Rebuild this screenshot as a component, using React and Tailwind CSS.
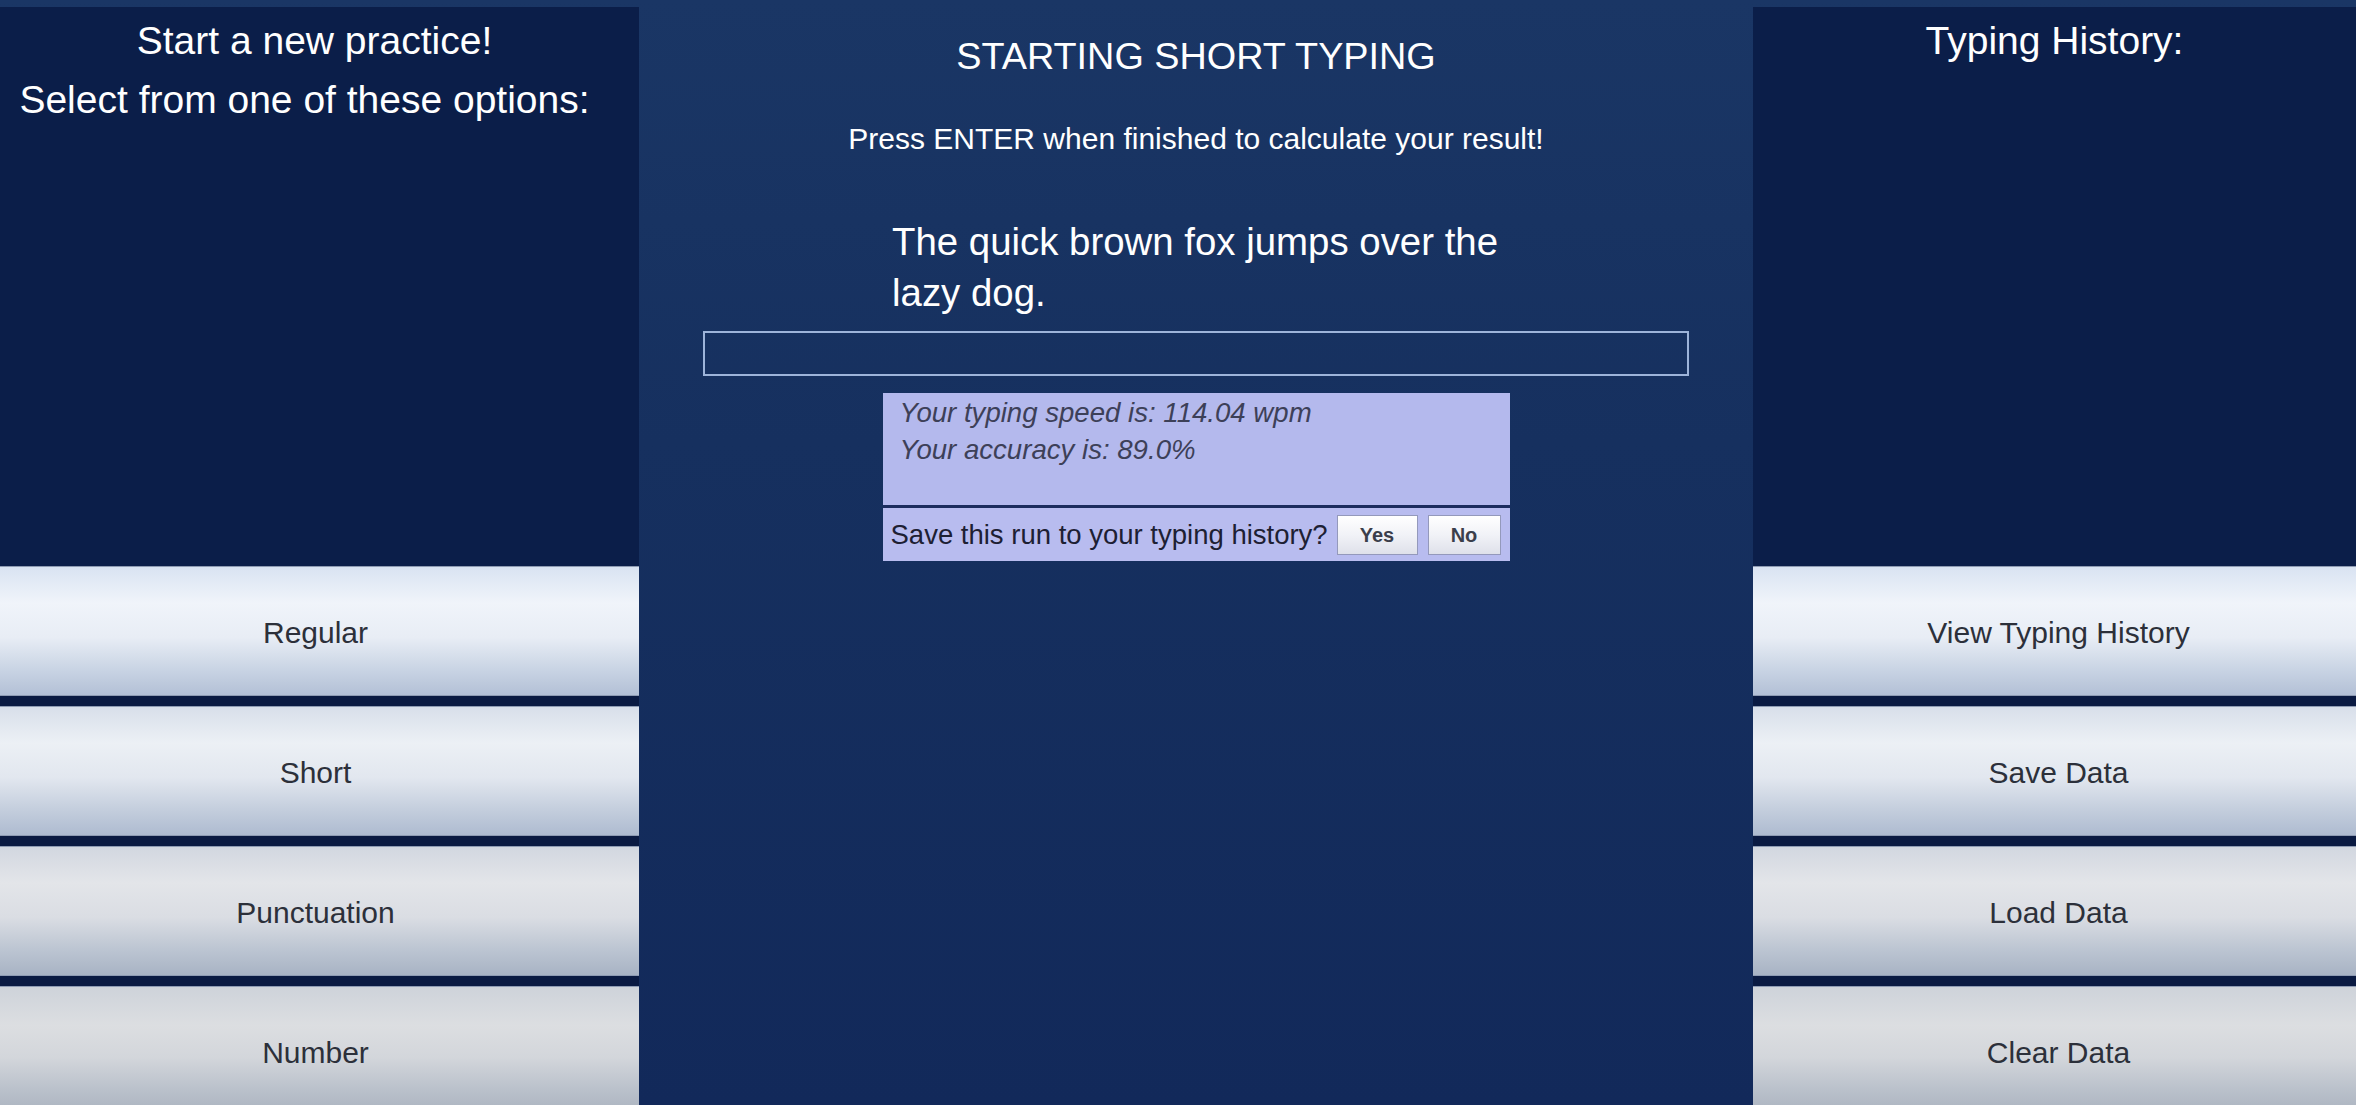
const FONT = "font-['Liberation_Sans',Arial,sans-serif]";

const LEFT_OPTIONS = ['Regular', 'Short', 'Punctuation', 'Number'];
const RIGHT_OPTIONS = ['View Typing History', 'Save Data', 'Load Data', 'Clear Data'];

// each row gets a little greyer further down, like the reference
const BUTTON_SHADES = [
  'bg-[linear-gradient(180deg,#d9e3f2_0%,#f0f4fa_28%,#e8edf5_55%,#c9d4e4_80%,#b3c0d6_100%)]',
  'bg-[linear-gradient(180deg,#d8dfea_0%,#ecf0f5_28%,#e2e7ef_55%,#c4cedd_80%,#aebbd0_100%)]',
  'bg-[linear-gradient(180deg,#d2d7e0_0%,#e3e5e9_28%,#dadde3_55%,#bcc5d2_80%,#a8b3c4_100%)]',
  'bg-[linear-gradient(180deg,#ced3da_0%,#dcdee1_30%,#d3d6db_55%,#bac1cb_80%,#aab2bf_100%)]',
];

function OptionButton({ label, shade, shift }) {
  return (
    <button
      className={`h-[130px] w-full shrink-0 border-y border-[#8e9bb3] pt-[2px] ${shift} ${shade} text-[30px] text-[#2c303a] ${FONT}`}
    >
      {label}
    </button>
  );
}

function SidePanel({ title, subtitle, options, shift, titleShift }) {
  return (
    <div className="mt-[7px] flex flex-col bg-[#0b1e49]">
      <div className="h-[559px] pt-[4px] text-center text-[39px] leading-[59px] text-white">
        <div className={`${titleShift} ${FONT}`}>{title}</div>
        {subtitle && <div className={`pr-[30px] ${FONT}`}>{subtitle}</div>}
      </div>
      <div className="flex flex-col gap-[10px] bg-[#0a1a42]">
        {options.map((label, i) => (
          <OptionButton key={label} label={label} shade={BUTTON_SHADES[i]} shift={shift} />
        ))}
      </div>
    </div>
  );
}

function SmallButton({ children, width }) {
  return (
    <button
      className={`${width} h-[40px] border border-[#9499bb] bg-[linear-gradient(180deg,#ffffff_0%,#f1f2f7_50%,#dfe1ea_100%)] text-[20px] font-bold text-[#3b3e4b] ${FONT}`}
    >
      {children}
    </button>
  );
}

export default function App() {
  return (
    <div className={`flex h-[1105px] w-full overflow-hidden bg-[linear-gradient(180deg,#1a3665_0%,#16305f_40%,#12295a_100%)] ${FONT}`}>
      <div className="w-[639px] shrink-0">
        <SidePanel
          title="Start a new practice!"
          subtitle="Select from one of these options:"
          options={LEFT_OPTIONS}
          shift="pr-[8px]"
          titleShift="pr-[10px]"
        />
      </div>

      <div className="flex flex-1 flex-col items-center pt-[34px] text-white">
        <div className="text-[37.8px] leading-[44px]">STARTING SHORT TYPING</div>
        <div className="mt-[43px] text-[30px] leading-[36px]">
          Press ENTER when finished to calculate your result!
        </div>
        <div className="mt-[59px] w-[620px] pl-[6px] text-[38.4px] leading-[51px]">
          The quick brown fox jumps over the lazy dog.
        </div>
        <input
          type="text"
          className="mt-[13px] h-[45px] w-[986px] border-2 border-[#9db4da] bg-transparent outline-none"
        />
        <div className="mt-[17px] w-[627px] bg-[#b4b9ed]">
          <div className="h-[112px] px-[17px] pt-[1px] text-[27.6px] italic leading-[37px] text-[#3d4058]">
            <div>Your typing speed is: 114.04 wpm</div>
            <div>Your accuracy is: 89.0%</div>
          </div>
          <div className="flex h-[56px] items-center justify-between border-t-[3px] border-[#1c2c5e] bg-[#b8bcef] pl-[8px] pr-[9px]">
            <span className="text-[27.5px] text-[#1d2033]">Save this run to your typing history?</span>
            <div className="flex gap-[10px]">
              <SmallButton width="w-[81px]">Yes</SmallButton>
              <SmallButton width="w-[73px]">No</SmallButton>
            </div>
          </div>
        </div>
      </div>

      <div className="w-[603px] shrink-0">
        <SidePanel title="Typing History:" options={RIGHT_OPTIONS} shift="pl-[8px]" titleShift="" />
      </div>
    </div>
  );
}
